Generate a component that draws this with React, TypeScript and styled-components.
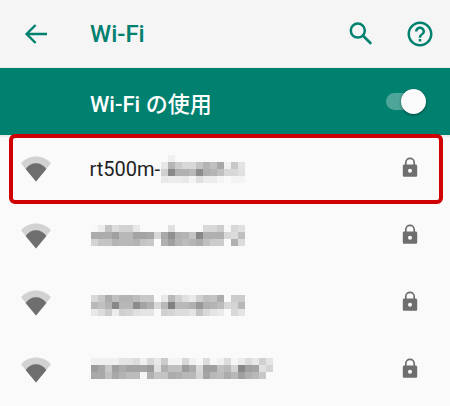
import React, { FC } from "react";
import styled, { createGlobalStyle } from "styled-components";

const TEAL = "#00806f";
const GRAY = "#6e6e6e";
const CELL = 7;

const GlobalStyle = createGlobalStyle`
    html, body {
        margin: 0;
        padding: 0;
        background: #fafafa;
    }
    body {
        font-family: Roboto, "Noto Sans CJK JP", sans-serif;
    }
`;

// blurred SSIDs, one string of gray levels per mosaic row
const hiddenFirst = [
    "fa f0 fa fa fa fa fa fa fa fa fa fa",
    "e8 b4 cc d8 d8 c4 b4 c0 a8 f0 c8 e4",
    "d0 88 b0 b0 b8 8c b0 b4 c0 d8 d8 e0",
    "e8 ec ec e8 f4 e0 ec ec f4 fa f4 f4",
];
const hiddenSecond = [
    "f8 ec c4 dc d2 d2 e8 fa fa fa fa e0 fa fa fa fa d8 d8 cc f8 d8 e0",
    "ac ac ac a0 b8 b8 a4 a4 a8 d8 a8 90 b0 b4 c4 88 b0 b0 b0 d8 dc c0",
    "d4 c4 c4 b4 b8 b8 b4 c4 c8 fc b0 a0 b4 bc b4 ac c0 cc cc fa b0 dc",
];
const hiddenThird = [
    "d8 c8 ac c0 b4 b4 bc c8 c8 fa e8 b8 d0 e0 ea d0 c0 c4 ac fa cc cc",
    "b8 c0 b4 88 b8 b8 8c a4 b0 d8 b8 80 b8 b8 b0 98 b0 b4 bc d8 d4 b8",
    "e8 dc cc ec d0 d4 e0 e4 e4 fa d0 d4 dc dc e4 c4 d8 e4 ea fa d8 e4",
];
const hiddenFourth = [
    "f0 f0 f0 f0 e4 e4 dc f0 d8 e8 cc f4 f4 d8 f0 f8 dc f8 f0 dc f6 ec dc e8 d0 e4",
    "9c a8 c8 a0 ac a4 a4 a4 9c e0 b0 c0 c0 9c ac d8 a0 a0 c0 b8 d4 88 a0 a4 e0 d4",
    "a8 a8 c0 a8 b4 bc bc f4 b0 c4 c4 ac b0 b8 b8 d4 a4 b8 bc ac b8 a0 b0 b8 c8 fa",
];

const Mosaic: FC<{ rows: string[]; nudge?: number }> = ({ rows, nudge = 0 }) => {
    const grid = rows.map((r) => r.split(" "));
    return (
        <MosaicBox $nudge={nudge} width={grid[0].length * CELL} height={grid.length * CELL} shapeRendering="crispEdges">
            {grid.map((cells, y) =>
                cells.map((v, x) => (
                    <rect key={`${x}-${y}`} x={x * CELL} y={y * CELL} width={CELL} height={CELL} fill={`#${v}${v}${v}`} />
                ))
            )}
        </MosaicBox>
    );
};

const WifiIcon = () => (
    <svg width="32" height="26" viewBox="0 0 32 26">
        <path d="M1 7.2C5 2.6 10 .4 16 .4s11 2.2 15 6.8L16 25.6z" fill="#d2d2d2" />
        <path d="M5.6 12.9C8.4 9.2 11.8 7.2 16 7.2s7.6 2 10.4 5.7L16 25.6z" fill={GRAY} />
    </svg>
);

const LockIcon = () => (
    <LockSvg width="16" height="21" viewBox="0 0 16 21">
        <path d="M3.8 8V5.6a4.2 4.2 0 0 1 8.4 0V8" fill="none" stroke={GRAY} strokeWidth="1.7" />
        <path
            fillRule="evenodd"
            d="M2.4 7.4h11.2c.9 0 1.6.7 1.6 1.6v9.2c0 .9-.7 1.6-1.6 1.6H2.4c-.9 0-1.6-.7-1.6-1.6V9c0-.9.7-1.6 1.6-1.6zM8 11.8a2 2 0 1 0 0 4 2 2 0 0 0 0-4z"
            fill={GRAY}
        />
    </LockSvg>
);

const BackIcon = () => (
    <svg width="24" height="22" viewBox="0 0 24 22">
        <path d="M23 11H3M11.6 2L2.6 11l9 9" fill="none" stroke={TEAL} strokeWidth="2.4" />
    </svg>
);

const SearchIcon = () => (
    <svg width="26" height="26" viewBox="0 0 26 26">
        <circle cx="8.8" cy="9.6" r="7" fill="none" stroke={TEAL} strokeWidth="2.5" />
        <path d="M14 14.8L21.4 22" fill="none" stroke={TEAL} strokeWidth="2.7" strokeLinecap="round" />
    </svg>
);

const HelpIcon = () => (
    <svg width="30" height="30" viewBox="0 0 24 24">
        <path
            fill={TEAL}
            d="M11 18h2v-2h-2v2zm1-16C6.48 2 2 6.48 2 12s4.48 10 10 10 10-4.48 10-10S17.52 2 12 2zm0 18c-4.41 0-8-3.59-8-8s3.59-8 8-8 8 3.59 8 8-3.59 8-8 8zm0-14c-2.21 0-4 1.79-4 4h2c0-1.1.9-2 2-2s2 .9 2 2c0 2-3 1.75-3 5h2c0-2.25 3-2.5 3-5 0-2.21-1.79-4-4-4z"
        />
    </svg>
);

const App: FC = () => {
    return (
        <Page>
            <GlobalStyle />
            <TopBar>
                <BackSlot>
                    <BackIcon />
                </BackSlot>
                <Title>Wi-Fi</Title>
                <Actions>
                    <SearchIcon />
                    <HelpIcon />
                </Actions>
            </TopBar>
            <MasterBar>
                <MasterLabel>Wi-Fi の使用</MasterLabel>
                <Toggle>
                    <Thumb />
                </Toggle>
            </MasterBar>
            <List>
                <Row>
                    <WifiIcon />
                    <Ssid>
                        <SsidText>rt500m-</SsidText>
                        <Mosaic rows={hiddenFirst} />
                    </Ssid>
                    <LockIcon />
                </Row>
                <Row>
                    <WifiIcon />
                    <Ssid>
                        <Mosaic rows={hiddenSecond} nudge={-1} />
                    </Ssid>
                    <LockIcon />
                </Row>
                <Row>
                    <WifiIcon />
                    <Ssid>
                        <Mosaic rows={hiddenThird} nudge={5} />
                    </Ssid>
                    <LockIcon />
                </Row>
                <Row>
                    <WifiIcon />
                    <Ssid>
                        <Mosaic rows={hiddenFourth} nudge={-3} />
                    </Ssid>
                    <LockIcon />
                </Row>
                <Highlight />
            </List>
        </Page>
    );
};

const Page = styled.div`
    width: 450px;
    height: 406px;
    overflow: hidden;
    display: flex;
    flex-direction: column;
    background: #fafafa;
`;
const TopBar = styled.div`
    height: 67px;
    display: flex;
    align-items: center;
    background: #f5f5f5;
    border-bottom: 1px solid #e4efed;
`;
const BackSlot = styled.div`
    width: 90px;
    padding-left: 24px;
    box-sizing: border-box;
    display: flex;
`;
const Title = styled.div`
    flex: 1;
    font-size: 24px;
    font-weight: 500;
    color: ${TEAL};
`;
const Actions = styled.div`
    display: flex;
    align-items: center;
    gap: 30px;
    padding-right: 15px;
`;
const MasterBar = styled.div`
    height: 67px;
    padding: 0 25px 0 90px;
    display: flex;
    align-items: center;
    justify-content: space-between;
    background: ${TEAL};
`;
const MasterLabel = styled.div`
    font-size: 22px;
    font-weight: 500;
    color: #fff;
`;
const Toggle = styled.div`
    position: relative;
    width: 39px;
    height: 17px;
    border-radius: 9px;
    background: #4da699;
`;
const Thumb = styled.div`
    position: absolute;
    right: -1px;
    top: -4.5px;
    width: 25px;
    height: 25px;
    border-radius: 50%;
    background: #fafafa;
    box-shadow: 0 1px 3px rgba(0, 0, 0, 0.45);
`;
const List = styled.div`
    position: relative;
    flex: 1;
    box-shadow: inset 0 3px 2px -1px rgba(0, 0, 0, 0.07);
`;
const Row = styled.div`
    height: 67px;
    padding: 0 32px 0 20px;
    display: flex;
    align-items: center;
`;
const Ssid = styled.div`
    flex: 1;
    margin-left: 39px;
    display: flex;
    align-items: center;
`;
const SsidText = styled.span`
    width: 71.5px;
    margin-left: -1.5px;
    font-size: 20px;
    color: #1f1f1f;
`;
const MosaicBox = styled.svg<{ $nudge: number }>`
    display: block;
    margin-top: ${(p) => p.$nudge}px;
`;
const LockSvg = styled.svg`
    margin-bottom: 2px;
`;
const Highlight = styled.div`
    position: absolute;
    left: 9px;
    top: -1px;
    width: 434px;
    height: 70px;
    box-sizing: border-box;
    border: 4px solid #d00000;
    border-radius: 6px;
`;

export default App;
